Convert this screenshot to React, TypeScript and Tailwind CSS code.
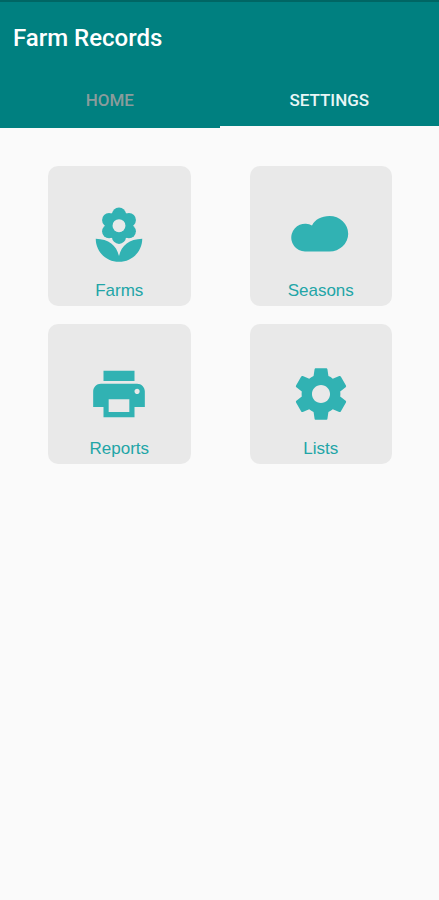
import { useState } from 'react';
import type { ReactNode } from 'react';
import { MdPrint } from 'react-icons/md';

function FlowerIcon() {
  return (
    <svg viewBox="0 0 24 24" className="size-[62px]" fill="currentColor" aria-hidden="true">
      <circle cx="12" cy="3.65" r="2.7" />
      <circle cx="15.85" cy="5.8" r="2.7" />
      <circle cx="15.85" cy="10.2" r="2.7" />
      <circle cx="12" cy="12.35" r="2.7" />
      <circle cx="8.15" cy="10.2" r="2.7" />
      <circle cx="8.15" cy="5.8" r="2.7" />
      <circle cx="12" cy="8" r="4" fill="none" stroke="currentColor" strokeWidth="3" />
      <circle cx="12" cy="8" r="2.5" fill="#e9e9e9" />
      <path d="M3 13.1c5 .1 8.100 2.600 9 6.700.9-4.100 4-6.600 9-6.700 0 5-4 8.900-9 8.900s-9-3.900-9-8.900z" />
    </svg>
  );
}

function CloudIcon() {
  return (
    <svg viewBox="0 0 62 62" className="size-[62px]" fill="currentColor" aria-hidden="true">
      <path d="M15 46.500a13.900 13.900 0 1 1 7-26C25 14.500 31.500 11 39.500 11a18.700 17.750 0 0 1 0 35.500z" />
    </svg>
  );
}

function GearIcon() {
  return (
    <svg viewBox="0 0 24 24" className="size-[62px]" fill="currentColor" aria-hidden="true">
      <path d="M19.43 12.98c.04-.32.07-.64.07-.98s-.03-.66-.07-.98l2.11-1.65c.19-.15.24-.42.12-.64l-2-3.46c-.12-.22-.39-.3-.61-.22l-2.49 1c-.52-.4-1.08-.73-1.69-.98l-.38-2.65C14.46 2.18 14.25 2 14 2h-4c-.25 0-.46.18-.49.42l-.38 2.65c-.61.25-1.17.59-1.69.98l-2.49-1c-.23-.09-.49 0-.61.22l-2 3.46c-.13.22-.07.49.12.64l2.11 1.65c-.04.32-.07.65-.07.98s.03.66.07.98l-2.11 1.65c-.19.15-.24.42-.12.64l2 3.46c.12.22.39.3.61.22l2.49-1c.52.4 1.08.73 1.69.98l.38 2.65c.03.24.24.42.49.42h4c.25 0 .46-.18.49-.42l.38-2.65c.61-.25 1.17-.59 1.69-.98l2.49 1c.23.09.49 0 .61-.22l2-3.46c.12-.22.07-.49-.12-.64l-2.11-1.65zM12 15.5c-1.93 0-3.5-1.57-3.5-3.5s1.57-3.5 3.5-3.5 3.5 1.57 3.5 3.5-1.57 3.5-3.5 3.5z" />
    </svg>
  );
}

const tiles: { label: string; icon: ReactNode }[] = [
  { label: 'Farms', icon: <FlowerIcon /> },
  { label: 'Seasons', icon: <CloudIcon /> },
  { label: 'Reports', icon: <MdPrint className="size-[62px]" aria-hidden="true" /> },
  { label: 'Lists', icon: <GearIcon /> },
];

const tabs = ['HOME', 'SETTINGS'];

export default function App() {
  const [active, setActive] = useState('SETTINGS');

  return (
    <div className="min-h-screen bg-[#fafafa] font-['Roboto',sans-serif]">
      <header className="border-t-2 border-[#006664] bg-[#008080]">
        <h1 className="px-[13px] pt-5 text-2xl leading-8 font-medium text-white">Farm Records</h1>
        <nav className="mt-5 flex" role="tablist">
          {tabs.map((tab) => (
            <button
              key={tab}
              type="button"
              role="tab"
              aria-selected={tab === active}
              onClick={() => setActive(tab)}
              className={`h-[54px] flex-1 border-b-2 text-[17px] leading-6 font-medium ${
                tab === active ? 'border-[#fafafa] text-[#e8f6f6]' : 'border-transparent text-[#8a9c9c]'
              }`}
            >
              {tab}
            </button>
          ))}
        </nav>
      </header>
      <main className="grid grid-cols-2 gap-x-[59px] gap-y-[18px] pt-[38px] pr-[47px] pl-12">
        {tiles.map((tile) => (
          <button
            key={tile.label}
            type="button"
            className="flex h-[140px] flex-col items-center justify-end rounded-[10px] bg-[#e9e9e9] pb-[3px] text-[#31b2b3]"
          >
            {tile.icon}
            <span className="mt-3 font-['Liberation_Sans',Arial,sans-serif] text-[17px] leading-6 text-[#22a5a7]">
              {tile.label}
            </span>
          </button>
        ))}
      </main>
    </div>
  );
}
